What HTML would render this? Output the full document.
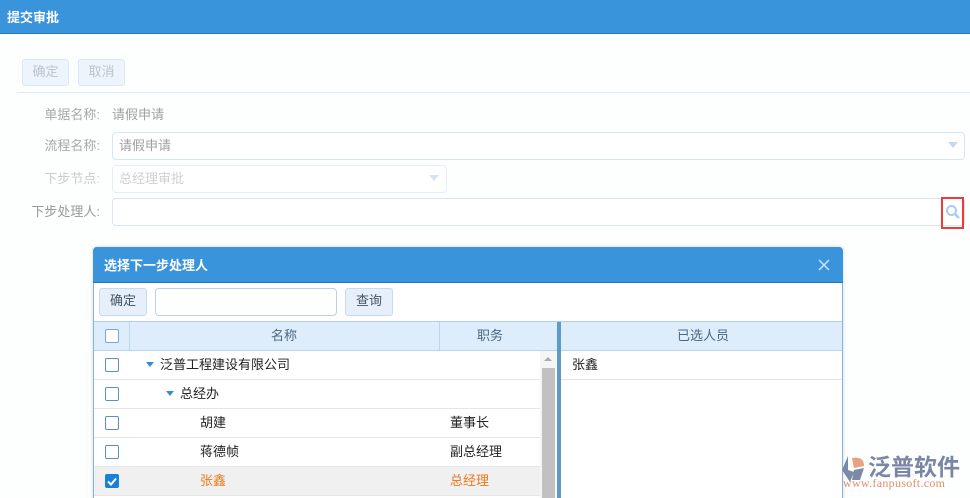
<!DOCTYPE html>
<html><head><meta charset="utf-8"><style>
*{margin:0;padding:0;box-sizing:border-box}
html{overflow:hidden;width:970px;height:498px}
body{width:970px;height:498px;overflow:hidden;background:#fdfefe;font-family:"Liberation Sans","Noto Sans CJK SC",sans-serif;font-size:13px;position:relative;color:#333}
.a{position:absolute}
.top{left:0;top:0;width:970px;height:34px;background:#3a94dc;border-bottom:1px solid #1f78c0}
.btn{background:#eef4fb;border:1px solid #dbe7f4;border-radius:3px;color:#b9c5d1;text-align:center;line-height:23px}
.lbl{color:#a8a8a8;text-align:right;width:88px;left:12px}
.inp{border:1px solid #d7e5f4;border-radius:4px;background:#fff}
.cb{width:14px;height:14px;border:1px solid #5a8fc4;border-radius:2px;background:#fff}
.row{left:94px;width:446px;height:29px;border-bottom:1px solid #e6e6e6}
.t{margin-top:-2px}
</style></head><body>
<div class="a top"></div>
<div class="a" style="left:7px;top:7px;color:#fff;font-weight:bold;font-size:13px">提交审批</div>
<div class="a btn" style="left:22px;top:59px;width:47px;height:27px">确定</div>
<div class="a btn" style="left:78px;top:59px;width:47px;height:27px">取消</div>
<div class="a" style="left:17px;top:92px;width:953px;height:1px;background:#dde9f5"></div>
<div class="a lbl" style="top:104px">单据名称:</div>
<div class="a" style="left:112px;top:104px;color:#a0a0a0">请假申请</div>
<div class="a lbl" style="top:135px">流程名称:</div>
<div class="a inp" style="left:112px;top:132px;width:853px;height:28px"></div>
<div class="a" style="left:119px;top:135px;color:#a0a0a0">请假申请</div>
<div class="a" style="left:948px;top:142px;border-left:5px solid transparent;border-right:5px solid transparent;border-top:6px solid #c6d8ec"></div>
<div class="a lbl" style="top:168px;color:#ccc">下步节点:</div>
<div class="a inp" style="left:112px;top:165px;width:335px;height:28px;border-color:#e6eef7"></div>
<div class="a" style="left:119px;top:168px;color:#d0d0d0">总经理审批</div>
<div class="a" style="left:429px;top:175px;border-left:5px solid transparent;border-right:5px solid transparent;border-top:6px solid #d6e3f1"></div>
<div class="a lbl" style="top:201px;color:#999">下步处理人:</div>
<div class="a inp" style="left:112px;top:198px;width:853px;height:28px"></div>
<div class="a" style="left:941px;top:197px;width:23px;height:32px;border:2px solid #f03a3a"></div>
<svg class="a" style="left:945px;top:204px" width="16" height="16"><circle cx="6.5" cy="6.5" r="4.5" fill="none" stroke="#a9cdee" stroke-width="2"/><path d="M10 10l4 4" stroke="#a9cdee" stroke-width="2.5"/></svg>

<div class="a" style="left:93px;top:247px;width:750px;height:260px;background:#fff;border:1px solid #7fb3e2;border-radius:4px 4px 0 0;box-shadow:0 0 4px rgba(0,0,0,.15)"></div>
<div class="a" style="left:93px;top:247px;width:750px;height:36px;background:#3a94dc;border-bottom:1px solid #1f78c0;border-radius:4px 4px 0 0"></div>
<div class="a" style="left:104px;top:255px;color:#fff;font-weight:bold">选择下一步处理人</div>
<svg class="a" style="left:818px;top:259px" width="12" height="12"><path d="M1 1L11 11M11 1L1 11" stroke="#cfe3f6" stroke-width="1.5"/></svg>
<div class="a btn" style="left:99px;top:288px;width:48px;height:28px;color:#456;border-color:#c7dbef;background:#e7f0fa;line-height:24px">确定</div>
<div class="a inp" style="left:155px;top:288px;width:182px;height:28px;border-color:#b9d2ea"></div>
<div class="a btn" style="left:345px;top:288px;width:48px;height:28px;color:#456;border-color:#c7dbef;background:#e7f0fa;line-height:24px">查询</div>
<div class="a" style="left:94px;top:321px;width:748px;height:30px;background:#deedfb;border-top:1px solid #b1cfea;border-bottom:1px solid #b9d5ee"></div>
<div class="a" style="left:129px;top:322px;width:1px;height:28px;background:#bed6ec"></div>
<div class="a" style="left:439px;top:322px;width:1px;height:28px;background:#bed6ec"></div>
<div class="a cb" style="left:105px;top:329px;border-color:#7aa7d2"></div>
<div class="a" style="left:271px;top:325px;color:#4a6782">名称</div>
<div class="a" style="left:477px;top:325px;color:#4a6782">职务</div>
<div class="a" style="left:677px;top:325px;color:#4a6782">已选人员</div>
<div class="a" style="left:557px;top:322px;width:4px;height:176px;background:#5d9acb"></div>

<div class="a row" style="top:351px"></div>
<div class="a row" style="top:380px"></div>
<div class="a row" style="top:409px"></div>
<div class="a row" style="top:438px"></div>
<div class="a row" style="top:467px;background:#f0f0f0"></div>
<div class="a cb" style="left:105px;top:358px"></div>
<div class="a cb" style="left:105px;top:387px"></div>
<div class="a cb" style="left:105px;top:416px"></div>
<div class="a cb" style="left:105px;top:445px"></div>
<div class="a cb" style="left:105px;top:474px;background:#1a7fd9;border-color:#1a7fd9"></div>
<svg class="a" style="left:107px;top:477px" width="10" height="9"><path d="M1 4.5L4 7.5L9 1.5" stroke="#fff" stroke-width="2" fill="none"/></svg>
<div class="a" style="left:146px;top:362px;border-left:4px solid transparent;border-right:4px solid transparent;border-top:5px solid #3a8ad4"></div>
<div class="a" style="left:160px;top:354px;color:#222">泛普工程建设有限公司</div>
<div class="a" style="left:166px;top:391px;border-left:4px solid transparent;border-right:4px solid transparent;border-top:5px solid #3a8ad4"></div>
<div class="a" style="left:180px;top:383px;color:#222">总经办</div>
<div class="a" style="left:200px;top:412px;color:#222">胡建</div>
<div class="a" style="left:450px;top:412px;color:#222">董事长</div>
<div class="a" style="left:200px;top:441px;color:#222">蒋德帧</div>
<div class="a" style="left:450px;top:441px;color:#222">副总经理</div>
<div class="a" style="left:200px;top:470px;color:#ea7a1e">张鑫</div>
<div class="a" style="left:450px;top:470px;color:#ea7a1e">总经理</div>
<div class="a" style="left:540px;top:351px;width:16px;height:147px;background:#f5f5f5"></div>
<div class="a" style="left:544px;top:357px;border-left:4px solid transparent;border-right:4px solid transparent;border-bottom:4px solid #aaa"></div>
<div class="a" style="left:542px;top:368px;width:13px;height:130px;background:#c1c1c1"></div>
<div class="a" style="left:561px;top:379px;width:281px;height:1px;background:#e3e3e3"></div>
<div class="a" style="left:572px;top:354px;color:#222">张鑫</div>

<svg class="a" style="left:840px;top:452px" width="28" height="36"><path d="M8 4L2 18L10 30L14 20L8 18Z" fill="#7a8aa6"/><path d="M12 6Q24 4 24 14L14 16Z" fill="#e7a37e"/><path d="M14 18L24 16L20 28L12 28Z" fill="#7a8aa6"/></svg>
<div class="a" style="left:868px;top:448px;font-size:23px;color:#7b86a4;font-weight:bold;letter-spacing:0px">泛普软件</div>
<div class="a" style="left:843px;top:476px;font-size:12px;color:#e28f6a;font-family:'Liberation Serif',serif;letter-spacing:.3px">www.fanpusoft.com</div>
</body></html>
